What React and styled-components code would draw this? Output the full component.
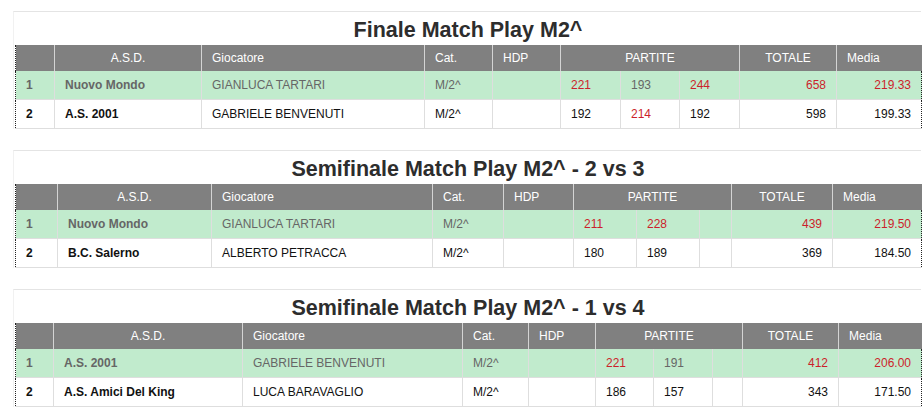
import React from "react";
import styled, { createGlobalStyle } from "styled-components";

const sections = [
  {
    title: "Finale Match Play M2^",
    widths: [39, 147, 223, 68, 68, 60, 59, 60, 97, 85],
    rows: [
      {
        pos: "1", club: "Nuovo Mondo", player: "GIANLUCA TARTARI", cat: "M/2^",
        games: [{ v: "221", hi: true }, { v: "193" }, { v: "244", hi: true }],
        total: "658", media: "219.33", win: true,
      },
      {
        pos: "2", club: "A.S. 2001", player: "GABRIELE BENVENUTI", cat: "M/2^",
        games: [{ v: "192" }, { v: "214", hi: true }, { v: "192" }],
        total: "598", media: "199.33",
      },
    ],
  },
  {
    title: "Semifinale Match Play M2^ - 2 vs 3",
    widths: [42, 154, 221, 71, 70, 63, 63, 32, 101, 89],
    rows: [
      {
        pos: "1", club: "Nuovo Mondo", player: "GIANLUCA TARTARI", cat: "M/2^",
        games: [{ v: "211", hi: true }, { v: "228", hi: true }, { v: "" }],
        total: "439", media: "219.50", win: true,
      },
      {
        pos: "2", club: "B.C. Salerno", player: "ALBERTO PETRACCA", cat: "M/2^",
        games: [{ v: "180" }, { v: "189" }, { v: "" }],
        total: "369", media: "184.50",
      },
    ],
  },
  {
    title: "Semifinale Match Play M2^ - 1 vs 4",
    widths: [38, 189, 220, 66, 67, 58, 59, 30, 96, 83],
    rows: [
      {
        pos: "1", club: "A.S. 2001", player: "GABRIELE BENVENUTI", cat: "M/2^",
        games: [{ v: "221", hi: true }, { v: "191" }, { v: "" }],
        total: "412", media: "206.00", win: true,
      },
      {
        pos: "2", club: "A.S. Amici Del King", player: "LUCA BARAVAGLIO", cat: "M/2^",
        games: [{ v: "186" }, { v: "157" }, { v: "" }],
        total: "343", media: "171.50",
      },
    ],
  },
];

const GlobalStyle = createGlobalStyle`
  body {
    margin: 0;
    background: #fff;
    font-family: "Liberation Sans", Arial, sans-serif;
  }
`;

const Page = styled.div`
  padding: 11px 2px 0 13px;
`;

const Section = styled.section`
  border-top: 1px solid #e4e4e4;
  border-left: 1px solid #f1f1f1;
  padding-left: 1px;
  margin-bottom: 21px;
`;

const Title = styled.h2`
  margin: 0;
  height: 33px;
  line-height: 36px;
  text-align: center;
  font-size: 21.5px;
  font-weight: bold;
  color: #2d2d2d;
`;

const Table = styled.table`
  width: 906px;
  border-collapse: collapse;
  table-layout: fixed;
  font-size: 12px;
`;

const HeadCell = styled.th`
  height: 26px;
  padding: 0 10px;
  background: #808080;
  color: #fff;
  font-weight: normal;
  text-align: ${({ align }) => align || "left"};
  border-left: 1px solid #d4d4d4;
  white-space: nowrap;
  &:first-child {
    border-left: 1px dotted #222;
  }
`;

const Row = styled.tr`
  background: ${({ win }) => (win ? "#c1ebcd" : "#fff")};
  color: ${({ win }) => (win ? "#666" : "#111")};
`;

const Cell = styled.td`
  height: 28px;
  padding: 0 10px;
  border-left: 1px solid #dedede;
  border-bottom: 1px solid #dedede;
  text-align: ${({ align }) => align || "left"};
  font-weight: ${({ bold }) => (bold ? "bold" : "normal")};
  color: ${({ red }) => (red ? "#cc1f2b" : "inherit")};
  white-space: nowrap;
  &:first-child {
    border-left: 1px dotted #222;
  }
  &:last-child {
    border-right: 1px dotted #222;
  }
`;

const ScoreTable = ({ section }) => (
  <Section>
    <Title>{section.title}</Title>
    <Table>
      <colgroup>
        {section.widths.map((w, i) => (
          <col key={i} style={{ width: w }} />
        ))}
      </colgroup>
      <thead>
        <tr>
          <HeadCell></HeadCell>
          <HeadCell align="center">A.S.D.</HeadCell>
          <HeadCell>Giocatore</HeadCell>
          <HeadCell>Cat.</HeadCell>
          <HeadCell>HDP</HeadCell>
          <HeadCell colSpan={3} align="center">PARTITE</HeadCell>
          <HeadCell align="center">TOTALE</HeadCell>
          <HeadCell>Media</HeadCell>
        </tr>
      </thead>
      <tbody>
        {section.rows.map((r) => (
          <Row key={r.pos} win={r.win}>
            <Cell bold>{r.pos}</Cell>
            <Cell bold>{r.club}</Cell>
            <Cell>{r.player}</Cell>
            <Cell>{r.cat}</Cell>
            <Cell></Cell>
            {r.games.map((g, i) => (
              <Cell key={i} red={g.hi}>{g.v}</Cell>
            ))}
            <Cell align="right" red={r.win}>{r.total}</Cell>
            <Cell align="right" red={r.win}>{r.media}</Cell>
          </Row>
        ))}
      </tbody>
    </Table>
  </Section>
);

export default function App() {
  return (
    <>
      <GlobalStyle />
      <Page>
        {sections.map((s) => (
          <ScoreTable key={s.title} section={s} />
        ))}
      </Page>
    </>
  );
}
